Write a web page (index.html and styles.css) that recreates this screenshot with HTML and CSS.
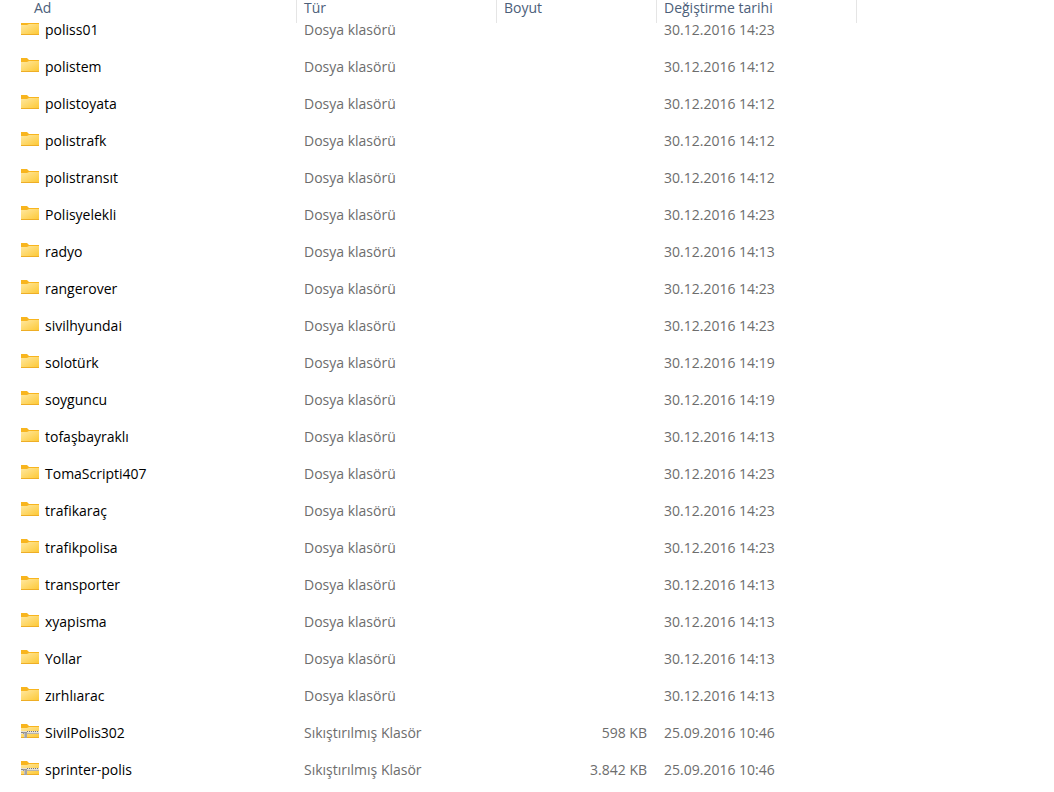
FILE: index.html
```
<!DOCTYPE html>
<html lang="tr">
  <head>
    <meta charset="UTF-8" />
    <meta name="viewport" content="width=device-width, initial-scale=1.0" />
    <title>Dosyalar</title>
    <link rel="stylesheet" href="styles.css">
  </head>
  <body>
    <svg class="symbols" aria-hidden="true">
      <defs>
        <linearGradient id="paper" x1="0" y1="0" x2="1" y2="1">
          <stop offset="0" stop-color="#ffe8a0" />
          <stop offset="1" stop-color="#fdc937" />
        </linearGradient>
      </defs>
      <symbol id="folder" viewBox="0 0 18 14">
        <path d="M0 0H6L8 2H18V13H0Z" fill="#f8b51e" />
        <path d="M0 4H6L8 3H18V13H0Z" fill="url(#paper)" />
        <rect y="13" width="18" height="1" fill="#eeae26" />
      </symbol>
      <!-- first row is partly scrolled under the header -->
      <symbol id="folder-cut" viewBox="0 2 18 12">
        <path d="M0 2H18V13H0Z" fill="#f8b51e" />
        <path d="M0 4H6L8 3H18V13H0Z" fill="url(#paper)" />
        <rect y="13" width="18" height="1" fill="#eeae26" />
      </symbol>
      <symbol id="zip" viewBox="0 0 18 14">
        <path d="M0 0H6L8 2H18V13H0Z" fill="#f8b51e" />
        <path d="M0 4H6L8 3H18V13H0Z" fill="url(#paper)" />
        <rect y="13" width="18" height="1" fill="#eeae26" />
        <rect y="7" width="18" height="3" fill="#e6e1d6" />
        <path d="M6 7.5H18" stroke="#77777c" stroke-dasharray="1 1" />
        <rect y="8" width="3" height="1" fill="#8a8578" />
        <rect x="6" y="9" width="12" height="1" fill="#b9b4aa" />
        <rect x="2" y="8" width="4" height="2" fill="#96969a" />
        <rect x="3" y="9" width="3" height="5" fill="#a4a4a8" />
        <rect x="3" y="9" width="1" height="4" fill="#c2c2c4" />
      </symbol>
    </svg>

    <table class="files">
      <colgroup>
        <col class="col-name">
        <col class="col-type">
        <col class="col-size">
        <col class="col-date">
        <col>
      </colgroup>
      <thead>
        <tr>
          <th class="first"><button>Ad</button></th>
          <th><button>Tür</button></th>
          <th><button>Boyut</button></th>
          <th><button>Değiştirme tarihi</button></th>
          <th></th>
        </tr>
      </thead>
      <tbody>
        <tr class="cut"><td><div class="name"><svg class="icon"><use href="#folder-cut" /></svg>poliss01</div></td><td>Dosya klasörü</td><td></td><td>30.12.2016 14:23</td><td></td></tr>
        <tr><td><div class="name"><svg class="icon"><use href="#folder" /></svg>polistem</div></td><td>Dosya klasörü</td><td></td><td>30.12.2016 14:12</td><td></td></tr>
        <tr><td><div class="name"><svg class="icon"><use href="#folder" /></svg>polistoyata</div></td><td>Dosya klasörü</td><td></td><td>30.12.2016 14:12</td><td></td></tr>
        <tr><td><div class="name"><svg class="icon"><use href="#folder" /></svg>polistrafk</div></td><td>Dosya klasörü</td><td></td><td>30.12.2016 14:12</td><td></td></tr>
        <tr><td><div class="name"><svg class="icon"><use href="#folder" /></svg>polistransıt</div></td><td>Dosya klasörü</td><td></td><td>30.12.2016 14:12</td><td></td></tr>
        <tr><td><div class="name"><svg class="icon"><use href="#folder" /></svg>Polisyelekli</div></td><td>Dosya klasörü</td><td></td><td>30.12.2016 14:23</td><td></td></tr>
        <tr><td><div class="name"><svg class="icon"><use href="#folder" /></svg>radyo</div></td><td>Dosya klasörü</td><td></td><td>30.12.2016 14:13</td><td></td></tr>
        <tr><td><div class="name"><svg class="icon"><use href="#folder" /></svg>rangerover</div></td><td>Dosya klasörü</td><td></td><td>30.12.2016 14:23</td><td></td></tr>
        <tr><td><div class="name"><svg class="icon"><use href="#folder" /></svg>sivilhyundai</div></td><td>Dosya klasörü</td><td></td><td>30.12.2016 14:23</td><td></td></tr>
        <tr><td><div class="name"><svg class="icon"><use href="#folder" /></svg>solotürk</div></td><td>Dosya klasörü</td><td></td><td>30.12.2016 14:19</td><td></td></tr>
        <tr><td><div class="name"><svg class="icon"><use href="#folder" /></svg>soyguncu</div></td><td>Dosya klasörü</td><td></td><td>30.12.2016 14:19</td><td></td></tr>
        <tr><td><div class="name"><svg class="icon"><use href="#folder" /></svg>tofaşbayraklı</div></td><td>Dosya klasörü</td><td></td><td>30.12.2016 14:13</td><td></td></tr>
        <tr><td><div class="name"><svg class="icon"><use href="#folder" /></svg>TomaScripti407</div></td><td>Dosya klasörü</td><td></td><td>30.12.2016 14:23</td><td></td></tr>
        <tr><td><div class="name"><svg class="icon"><use href="#folder" /></svg>trafikaraç</div></td><td>Dosya klasörü</td><td></td><td>30.12.2016 14:23</td><td></td></tr>
        <tr><td><div class="name"><svg class="icon"><use href="#folder" /></svg>trafikpolisa</div></td><td>Dosya klasörü</td><td></td><td>30.12.2016 14:23</td><td></td></tr>
        <tr><td><div class="name"><svg class="icon"><use href="#folder" /></svg>transporter</div></td><td>Dosya klasörü</td><td></td><td>30.12.2016 14:13</td><td></td></tr>
        <tr><td><div class="name"><svg class="icon"><use href="#folder" /></svg>xyapisma</div></td><td>Dosya klasörü</td><td></td><td>30.12.2016 14:13</td><td></td></tr>
        <tr><td><div class="name"><svg class="icon"><use href="#folder" /></svg>Yollar</div></td><td>Dosya klasörü</td><td></td><td>30.12.2016 14:13</td><td></td></tr>
        <tr><td><div class="name"><svg class="icon"><use href="#folder" /></svg>zırhlıarac</div></td><td>Dosya klasörü</td><td></td><td>30.12.2016 14:13</td><td></td></tr>
        <tr><td><div class="name"><svg class="icon"><use href="#zip" /></svg>SivilPolis302</div></td><td>Sıkıştırılmış Klasör</td><td class="size">598 KB</td><td>25.09.2016 10:46</td><td></td></tr>
        <tr><td><div class="name"><svg class="icon"><use href="#zip" /></svg>sprinter-polis</div></td><td>Sıkıştırılmış Klasör</td><td class="size">3.842 KB</td><td>25.09.2016 10:46</td><td></td></tr>
      </tbody>
    </table>
  </body>
</html>
```
FILE: styles.css
```
body {
  margin: 0;
  background: #fff;
  color: #6d6d6d;
  font-family: "Open Sans", "Noto Sans", sans-serif;
  font-size: 14px;
  line-height: 20px;
}
.symbols {
  display: block;
  width: 0;
  height: 0;
}
.files {
  width: 100%;
  border-collapse: separate;
  border-spacing: 0;
  table-layout: fixed;
}
.col-name {
  width: 297px;
}
.col-type,
.col-date {
  width: 200px;
}
.col-size {
  width: 160px;
}
th {
  height: 23px;
  padding: 0 7px;
  border-right: 1px solid #e5e5e5;
  box-sizing: border-box;
  text-align: left;
  vertical-align: top;
}
th.first {
  padding-left: 34px;
}
th:last-child {
  border-right: none;
}
th button {
  display: block;
  padding: 0;
  border: none;
  background: none;
  color: #4c607a;
  font: inherit;
  font-weight: 400;
  line-height: 16px;
  cursor: pointer;
}
td {
  padding: 8px 10px 9px 7px;
  white-space: nowrap;
  vertical-align: top;
}
td:first-child {
  padding-left: 21px;
}
.cut td {
  padding-top: 0;
  padding-bottom: 12px;
  line-height: 14px;
}
.name {
  display: flex;
  gap: 6px;
  color: #000;
}
.icon {
  flex: none;
  width: 18px;
  height: 14px;
  margin-top: 1px;
}
.cut .icon {
  height: 12px;
  margin-top: 0;
}
.size {
  text-align: right;
}
```
